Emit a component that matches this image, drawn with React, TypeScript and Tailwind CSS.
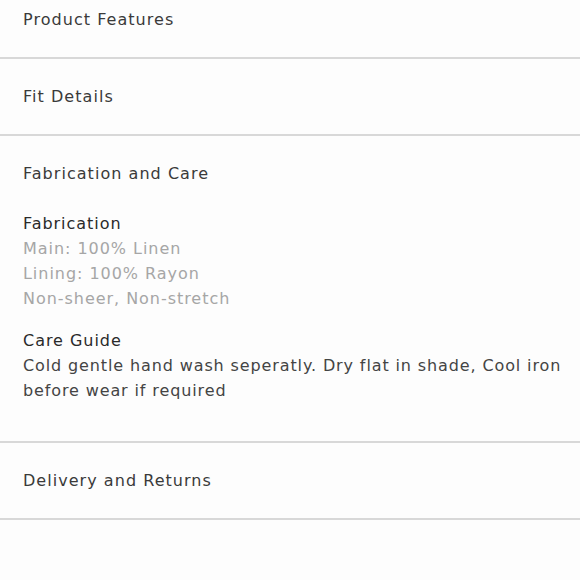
const rowText = "text-[16px] leading-[25px] tracking-[0.065em] text-[#3a3a3a]";

const Row = ({ title, first }: { title: string; first?: boolean }) => (
  <div className={`px-[23px] border-b-2 border-[#d8d8d8] ${first ? "pt-[7px] pb-[25px]" : "py-[25px]"}`}>
    <p className={rowText}>{title}</p>
  </div>
);

export default function App() {
  return (
    <div
      className="w-[580px] h-[580px] overflow-hidden bg-[#fdfdfd]"
      style={{ fontFamily: '"DejaVu Sans", "Liberation Sans", sans-serif' }}
    >
      <Row title="Product Features" first />
      <Row title="Fit Details" />

      <div className="pl-[23px] pr-[10px] pt-[25px] pb-[38px] border-b-2 border-[#d8d8d8]">
        <p className={rowText}>Fabrication and Care</p>

        <div className="mt-[25px]">
          <p className="text-[16px] leading-[25px] tracking-[0.06em] text-[#2a2a2a]">Fabrication</p>
          <p className="text-[16px] leading-[25px] tracking-[0.06em] text-[#a6a6a6]">Main: 100% Linen</p>
          <p className="text-[16px] leading-[25px] tracking-[0.06em] text-[#a6a6a6]">Lining: 100% Rayon</p>
          <p className="text-[16px] leading-[25px] tracking-[0.06em] text-[#a6a6a6]">Non-sheer, Non-stretch</p>
        </div>

        <div className="mt-[17px]">
          <p className="text-[16px] leading-[25px] tracking-[0.06em] text-[#2a2a2a]">Care Guide</p>
          <p className="text-[16px] leading-[25px] tracking-[0.055em] text-[#444444]">
            Cold gentle hand wash seperatly. Dry flat in shade, Cool iron before wear if required
          </p>
        </div>
      </div>

      <Row title="Delivery and Returns" />
    </div>
  );
}
